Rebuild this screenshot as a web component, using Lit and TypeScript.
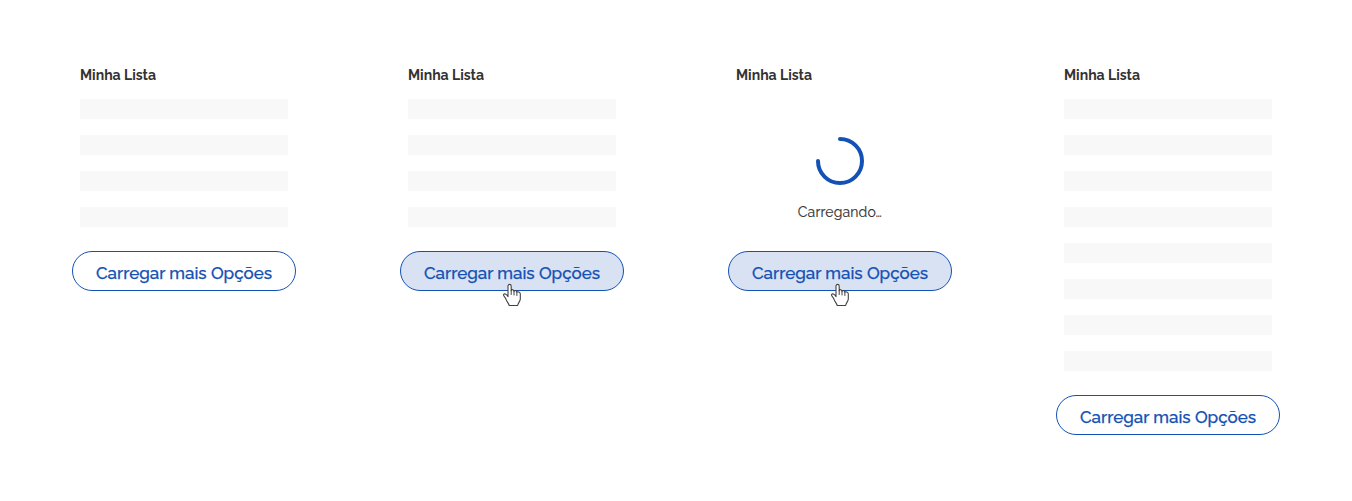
import { LitElement, html, css, nothing } from "lit";
import { customElement, property } from "lit/decorators.js";

@customElement("load-more-list")
class LoadMoreList extends LitElement {
  @property({ type: Number }) rows = 4;
  @property({ type: Boolean }) hovered = false;
  @property({ type: Boolean }) loading = false;

  static styles = css`
    :host { display: block; width: 224px; }
    .content { padding: 0 8px; }
    .title {
      margin: 0 0 14px; height: 20px; line-height: 20px;
      font-size: 14px; font-weight: 700; color: #333;
      white-space: nowrap;
    }
    .rows { display: grid; gap: 16px; }
    .row { height: 20px; background: #f8f8f8; }
    .loader {
      height: 128px; box-sizing: border-box; padding-top: 38px;
      display: flex; flex-direction: column; align-items: center;
    }
    .loader svg { display: block; }
    .status {
      margin-top: 17px; line-height: 20px; font-size: 14px;
      font-weight: 400; letter-spacing: 0.15px; color: #333; white-space: nowrap;
      -webkit-text-stroke: 0.15px #333;
    }
    .action { position: relative; margin-top: 24px; }
    .button {
      display: flex; width: 224px; height: 40px; box-sizing: border-box;
      align-items: center; justify-content: center; padding: 3px 0 0;
      border: 1px solid #1351b4; border-radius: 20px; background: #fff;
      color: #1351b4; font: inherit; font-size: 17px; font-weight: 500;
      line-height: 24px; white-space: nowrap;
      -webkit-text-stroke: 0.25px #1351b4;
    }
    .hovered { background: #d9e2f3; }
    .cursor { position: absolute; left: 102px; top: 32px; display: block; }
  `;

  render() {
    return html`
      <div class="content">
        <h2 class="title">Minha Lista</h2>
        ${this.loading
          ? html`<div class="loader">
              <svg width="48" height="48" viewBox="0 0 48 48">
                <path d="M24 2A22 22 0 1 1 2 24" fill="none" stroke="#1351b4" stroke-width="4" stroke-linecap="round" />
              </svg>
              <div class="status">Carregando…</div>
            </div>`
          : html`<div class="rows">
              ${Array.from({ length: this.rows }, () => html`<div class="row"></div>`)}
            </div>`}
      </div>
      <div class="action">
        <button class="button ${this.hovered ? "hovered" : ""}">Carregar mais Opções</button>
        ${this.hovered
          ? html`<svg class="cursor" width="20" height="24" viewBox="0 0 20 24">
              <path d="M6 14V3.2C6 .8 9.2.8 9.2 3.2V7.5C9.6 6.2 12 6.5 12 8.2C12.6 7.1 14.9 7.5 14.9 9.2C15.5 8.3 18.3 8.8 18.3 10.8V16C18.3 18.2 16.2 19.6 15.6 22.5H7.2C6.6 20 4.6 18.4 3.8 15.8C3.2 14.1 1.3 13 1.5 11.7C2 10.1 4.4 10.8 6 13.4"
                fill="#fff" stroke="#404040" stroke-width="1.1" stroke-linejoin="round" />
              <path d="M9.2 7.5V11.5M12 8.2V12M14.9 9.2V12.5" fill="none" stroke="#404040" stroke-width="1" stroke-linecap="round" />
            </svg>`
          : nothing}
      </div>
    `;
  }
}

@customElement("app-root")
class AppRoot extends LitElement {
  static styles = css`
    :host {
      display: flex; align-items: flex-start; gap: 104px;
      box-sizing: border-box; width: 1352px; height: 501px;
      padding: 65px 72px 0; background: #fff;
      font-family: Raleway, Lato, sans-serif;
    }
  `;

  render() {
    return html`
      <load-more-list></load-more-list>
      <load-more-list hovered></load-more-list>
      <load-more-list hovered loading></load-more-list>
      <load-more-list rows="8"></load-more-list>
    `;
  }
}
